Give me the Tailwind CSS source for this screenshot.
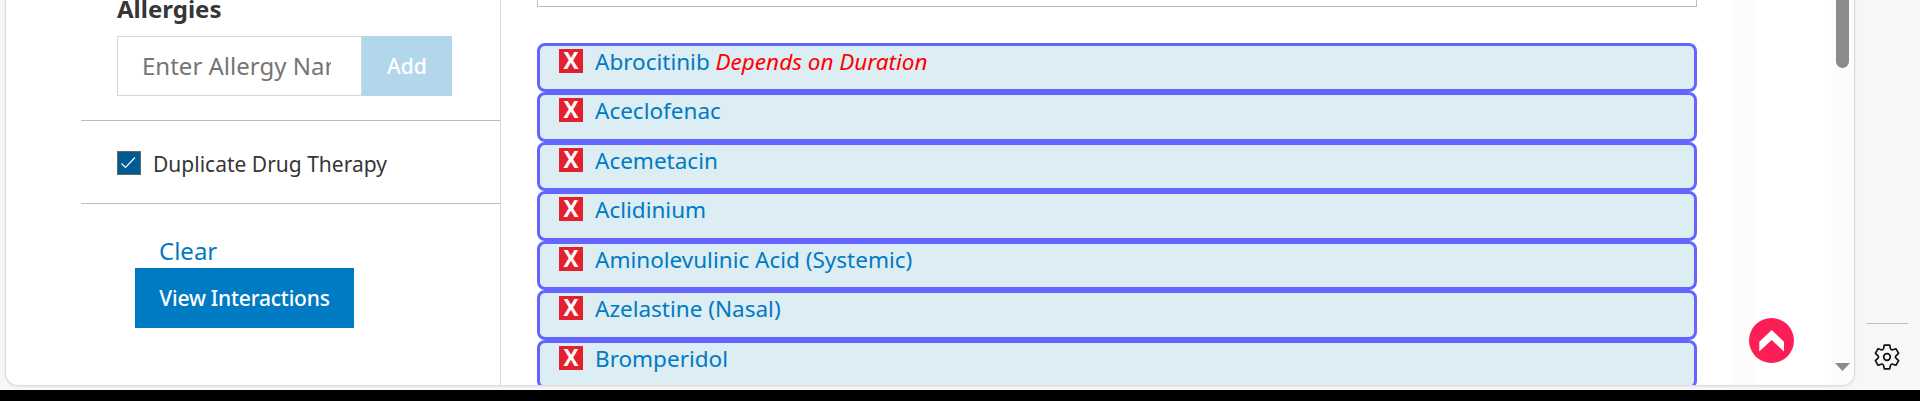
<!DOCTYPE html>
<html lang="en">
<head>
<meta charset="utf-8">
<title>Drug Interactions</title>
<script src="https://cdn.jsdelivr.net/npm/@tailwindcss/browser@4"></script>
</head>
<body class="h-[401px] overflow-hidden bg-black font-['Noto_Sans',sans-serif]">
<div class="flex h-[390px] bg-[#f7f7f7] pl-[5px]">
  <main class="relative flex h-[386px] w-[1850px] shrink-0 overflow-hidden rounded-b-[13px] border border-t-0 border-[#dcdcdc] bg-white shadow-[0_1px_3px_rgba(0,0,0,0.08)]">
    <aside class="flex w-[495px] shrink-0 flex-col border-r border-[#d8d8d8] pl-[75px]">
      <h2 class="h-9 pl-9 text-[24px] leading-[17px] font-bold text-[#363636]">Allergies</h2>
      <div class="flex h-[60px] pl-9">
        <div class="flex w-[245px] items-center border border-r border-[#d8d8d8] pr-[30px] pl-6">
          <span class="block overflow-hidden text-[24px] leading-[40px] whitespace-nowrap text-[#757575]">Enter Allergy Name</span>
        </div>
        <button class="w-[90px] bg-[#b2d6ec] pt-[2px] text-[21px] font-medium text-white">Add</button>
      </div>
      <div class="mt-6 flex h-[84px] items-center gap-3 border-y border-[#bcbcbc] pl-9">
        <span class="mt-[2px] flex size-6 items-center justify-center border border-[#666] bg-[#005b92]">
          <svg class="size-[22px]" viewBox="0 0 22 22" fill="none" stroke="#fff" stroke-width="1.1"><path d="M3.500 11.500 7.500 15.500 17 5.500"/></svg>
        </span>
        <span class="pt-[3px] text-[21px] leading-6 text-[#363636]">Duplicate Drug Therapy</span>
      </div>
      <a class="mt-[29px] h-[35px] pl-[78px] text-[24px] leading-[36px] text-[#007ac3]">Clear</a>
      <button class="ml-[54px] h-[60px] w-[219px] shrink-0 bg-[#007ac3] pt-[2px] text-[21px] font-medium tracking-[-0.22px] text-white">View Interactions</button>
    </aside>

    <section class="flex w-[1232px] shrink-0 flex-col pl-9">
      <div class="h-[7px] w-[1160px] shrink-0 border border-t-0 border-[#bcbcbc]"></div>
      <ul class="mt-[35.9px] w-[1160px] text-[22.5px] leading-[25px] text-[#007ac3]">
        <li class="flex h-[49.5px] items-start gap-3 rounded-[8px] border-3 border-[#6464ff] bg-[#dcedf4] pt-[3px] pl-[19px]"><span class="size-6 shrink-0 bg-[#e5202e] text-center font-['Open_Sans',sans-serif] text-[22.5px] leading-[23px] font-bold text-white">X</span><span>Abrocitinib <i class="text-[#ff0000]">Depends on Duration</i></span></li>
        <li class="flex h-[49.5px] items-start gap-3 rounded-[8px] border-3 border-[#6464ff] bg-[#dcedf4] pt-[3px] pl-[19px]"><span class="size-6 shrink-0 bg-[#e5202e] text-center font-['Open_Sans',sans-serif] text-[22.5px] leading-[23px] font-bold text-white">X</span><span>Aceclofenac</span></li>
        <li class="flex h-[49.5px] items-start gap-3 rounded-[8px] border-3 border-[#6464ff] bg-[#dcedf4] pt-[3px] pl-[19px]"><span class="size-6 shrink-0 bg-[#e5202e] text-center font-['Open_Sans',sans-serif] text-[22.5px] leading-[23px] font-bold text-white">X</span><span>Acemetacin</span></li>
        <li class="flex h-[49.5px] items-start gap-3 rounded-[8px] border-3 border-[#6464ff] bg-[#dcedf4] pt-[3px] pl-[19px]"><span class="size-6 shrink-0 bg-[#e5202e] text-center font-['Open_Sans',sans-serif] text-[22.5px] leading-[23px] font-bold text-white">X</span><span>Aclidinium</span></li>
        <li class="flex h-[49.5px] items-start gap-3 rounded-[8px] border-3 border-[#6464ff] bg-[#dcedf4] pt-[3px] pl-[19px]"><span class="size-6 shrink-0 bg-[#e5202e] text-center font-['Open_Sans',sans-serif] text-[22.5px] leading-[23px] font-bold text-white">X</span><span>Aminolevulinic Acid (Systemic)</span></li>
        <li class="flex h-[49.5px] items-start gap-3 rounded-[8px] border-3 border-[#6464ff] bg-[#dcedf4] pt-[3px] pl-[19px]"><span class="size-6 shrink-0 bg-[#e5202e] text-center font-['Open_Sans',sans-serif] text-[22.5px] leading-[23px] font-bold text-white">X</span><span>Azelastine (Nasal)</span></li>
        <li class="flex h-[49.5px] items-start gap-3 rounded-[8px] border-3 border-[#6464ff] bg-[#dcedf4] pt-[3px] pl-[19px]"><span class="size-6 shrink-0 bg-[#e5202e] text-center font-['Open_Sans',sans-serif] text-[22.5px] leading-[23px] font-bold text-white">X</span><span>Bromperidol</span></li>
      </ul>
    </section>

    <div class="w-[23px] shrink-0 bg-[#fcfcfc]"></div>
    <div class="w-[75px] shrink-0"></div>
    <div class="flex w-[23px] shrink-0 flex-col items-center justify-between bg-[#fcfcfc] pb-[14px]">
      <div class="h-[68px] w-[13px] rounded-b-full bg-[#8b8b8b]"></div>
      <svg class="h-2 w-[15px]" viewBox="0 0 15 8"><path d="M0 0h15L7.500 8z" fill="#8b8b8b"/></svg>
    </div>
    <button class="absolute top-[318px] left-[1743px] size-[45px] rounded-full bg-[#fb1e57]">
      <svg class="size-[45px]" viewBox="0 0 45 45"><path d="M10.300 23.800 22.700 12 35 23.800V33.500L22.700 22 10.300 33.500z" fill="#fff"/></svg>
    </button>
  </main>

  <nav class="flex flex-1 flex-col items-center pt-[323px] pr-[1px]">
    <div class="h-px w-[42px] bg-[#bebebe]"></div>
    <svg class="mt-5 size-[26px]" viewBox="0 0 26 26" fill="none" stroke="#111" stroke-width="1.7" stroke-linejoin="round"><path d="M10.300 1.100H15.700L16.400 4.400Q16.800 6.200 18.800 5.700L21.900 4.700 24.600 9.400 22.200 11.600Q20.700 13 22.200 14.400L24.600 16.600 21.900 21.300 18.800 20.300Q16.800 19.800 16.400 21.600L15.700 24.900H10.300L9.600 21.600Q9.200 19.800 7.200 20.300L4.100 21.300 1.400 16.600 3.800 14.400Q5.300 13 3.800 11.600L1.400 9.400 4.100 4.700 7.200 5.700Q9.200 6.200 9.600 4.400Z"/><circle cx="13" cy="13" r="3.300"/></svg>
  </nav>
</div>
</body>
</html>
